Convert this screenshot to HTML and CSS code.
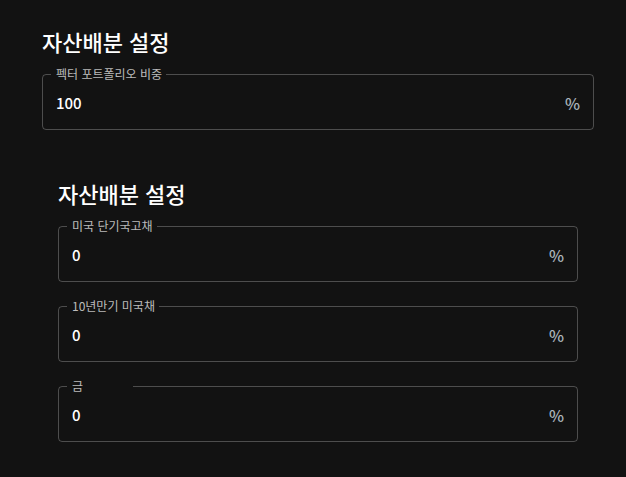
FILE: index.html
```html
<!DOCTYPE html>
<html lang="ko">
<head>
<meta charset="utf-8">
<link rel="stylesheet" href="styles.css">
</head>
<body>
<main class="page">
  <section class="section">
    <h2 class="title">자산배분 설정</h2>
    <fieldset class="field">
      <legend class="notch">펙터 포트폴리오 비중</legend>
      <div class="field-row"><span class="value">100</span><span class="unit">%</span></div>
    </fieldset>
  </section>
  <section class="section section-inner">
    <h2 class="title">자산배분 설정</h2>
    <div class="fields">
      <fieldset class="field">
        <legend class="notch">미국 단기국고채</legend>
        <div class="field-row"><span class="value">0</span><span class="unit">%</span></div>
      </fieldset>
      <fieldset class="field">
        <legend class="notch">10년만기 미국채</legend>
        <div class="field-row"><span class="value">0</span><span class="unit">%</span></div>
      </fieldset>
      <fieldset class="field">
        <legend class="notch notch-wide">금</legend>
        <div class="field-row"><span class="value">0</span><span class="unit">%</span></div>
      </fieldset>
    </div>
  </section>
</main>
</body>
</html>
```

FILE: styles.css
```css
* { box-sizing: border-box; }
html, body {
  margin: 0;
  background: #121212;
  color: #fff;
  font-family: "Noto Sans CJK KR", "Noto Sans", sans-serif;
}
.page {
  padding: 24px 0 0 42px;
  width: 594px;
  display: flex;
  flex-direction: column;
}
.section {
  display: flex;
  flex-direction: column;
}
.section-inner {
  margin-top: 46px;
  padding: 0 16px;
}
.title {
  margin: 0 0 9px;
  font-size: 22px;
  font-weight: 500;
  line-height: 34px;
  color: #fff;
}
.fields {
  display: flex;
  flex-direction: column;
  gap: 17px;
}
.field {
  margin: 0;
  padding: 0 13px 0 8px;
  border: 1px solid rgba(255,255,255,0.25);
  border-radius: 4px;
  min-width: 0;
}
.notch {
  padding: 0 4px 0 5px;
  font-size: 12px;
  line-height: 14px;
  color: rgba(255,255,255,0.72);
}
.notch-wide {
  width: 66px;
}
.field-row {
  height: 48px;
  padding: 0 0 0 5px;
  display: flex;
  align-items: center;
  justify-content: space-between;
}
.value {
  font-size: 15px;
  font-weight: 500;
  color: #fff;
  padding-bottom: 5px;
}
.unit {
  font-size: 16px;
  font-weight: 500;
  color: rgba(220,228,236,0.78);
  padding-bottom: 5px;
}
```
